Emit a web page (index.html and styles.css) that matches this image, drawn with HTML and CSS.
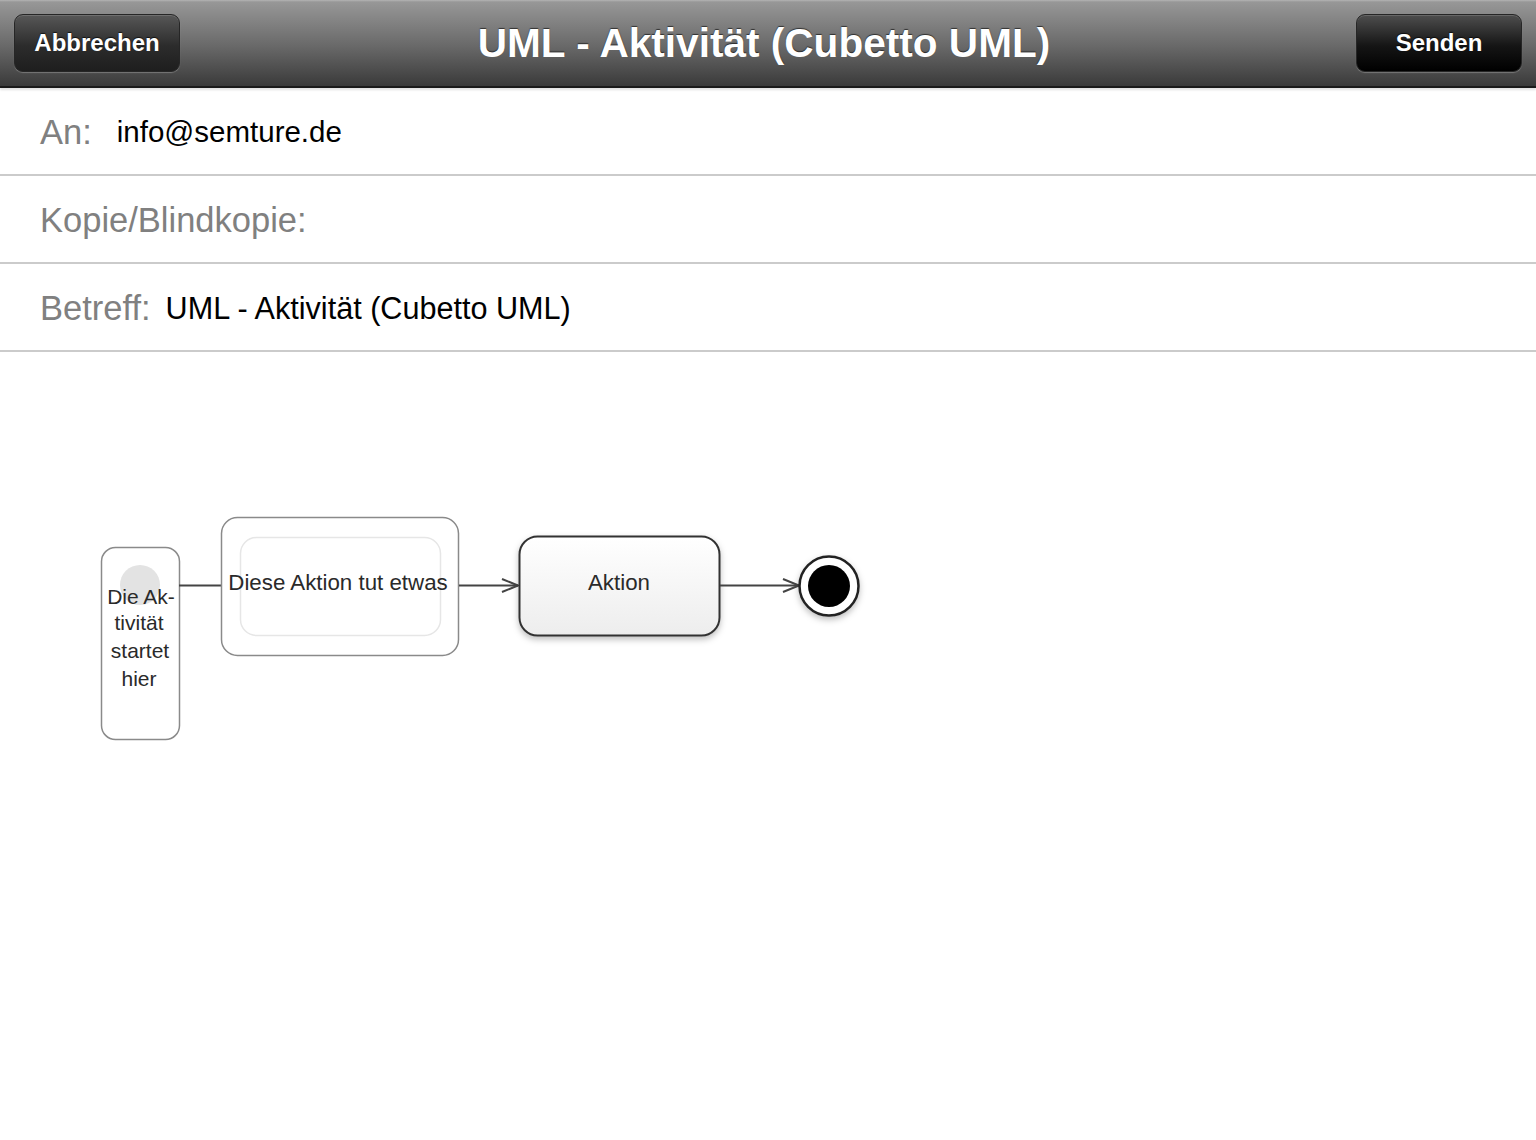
FILE: index.html
```html
<!DOCTYPE html>
<html lang="de">
<head>
    <meta charset="UTF-8">
    <meta name="viewport" content="width=device-width, initial-scale=1.0">
    <title>UML - Aktivität (Cubetto UML)</title>
    <link rel="stylesheet" href="styles.css">
</head>
<body>
    <div id="mailComposer">
        <div class="nav-bar">
            <button class="nav-button cancel">Abbrechen</button>
            <h1 class="nav-title">UML - Aktivität (Cubetto UML)</h1>
            <button class="nav-button send">Senden</button>
        </div>

        <div class="field-row">
            <span class="field-label">An:</span>
            <span class="field-value to">info@semture.de</span>
        </div>
        <div class="field-row">
            <span class="field-label">Kopie/Blindkopie:</span>
        </div>
        <div class="field-row">
            <span class="field-label">Betreff:</span>
            <span class="field-value">UML - Aktivität (Cubetto UML)</span>
        </div>

        <div class="mail-body">
            <svg class="diagram" width="900" height="420" viewBox="0 352 900 420">
                <defs>
                    <linearGradient id="actionFill" x1="0" y1="0" x2="0" y2="1">
                        <stop offset="0" stop-color="#ffffff"/>
                        <stop offset="1" stop-color="#ededed"/>
                    </linearGradient>
                    <filter id="shadow" x="-20%" y="-20%" width="140%" height="150%">
                        <feDropShadow dx="0" dy="3" stdDeviation="3" flood-color="#000" flood-opacity="0.25"/>
                    </filter>
                </defs>

                <!-- start node -->
                <rect x="101.5" y="547.5" width="78" height="192" rx="14" fill="#fff" stroke="#8a8a8a" stroke-width="1.5"/>
                <circle cx="140" cy="585" r="20" fill="#e3e3e3"/>
                <text class="node-text small" x="141" y="604">Die Ak-</text>
                <text class="node-text small" x="139" y="630">tivität</text>
                <text class="node-text small" x="140" y="658">startet</text>
                <text class="node-text small" x="139" y="686">hier</text>

                <line x1="179" y1="585.5" x2="221" y2="585.5" stroke="#444" stroke-width="2"/>

                <!-- first action -->
                <rect x="221.5" y="517.5" width="237" height="138" rx="16" fill="#fff" stroke="#8a8a8a" stroke-width="1.5"/>
                <rect x="240.5" y="537.5" width="200" height="98" rx="16" fill="none" stroke="#e6e6e6" stroke-width="1.5"/>
                <text class="node-text" x="338" y="590">Diese Aktion tut etwas</text>

                <line x1="459" y1="585.5" x2="518" y2="585.5" stroke="#444" stroke-width="2"/>
                <polyline points="502,579 518,585.5 502,592" fill="none" stroke="#444" stroke-width="2"/>

                <!-- second action -->
                <rect x="519.5" y="536.5" width="200" height="99" rx="18" fill="url(#actionFill)" stroke="#333" stroke-width="2" filter="url(#shadow)"/>
                <text class="node-text" x="619" y="590">Aktion</text>

                <line x1="720" y1="585.5" x2="799" y2="585.5" stroke="#444" stroke-width="2"/>
                <polyline points="783,579 799,585.5 783,592" fill="none" stroke="#444" stroke-width="2"/>

                <!-- end node -->
                <circle cx="829" cy="586" r="29.5" fill="#fff" stroke="#222" stroke-width="2.5" filter="url(#shadow)"/>
                <circle cx="829" cy="586" r="21" fill="#000"/>
            </svg>
        </div>
    </div>
</body>
</html>
```

FILE: styles.css
```css
body {
    margin: 0;
    padding: 0;
    background-color: #fff;
    font-family: "Liberation Sans", Arial, sans-serif;
}

#mailComposer {
    width: 1536px;
    min-height: 1140px;
    background-color: #fff;
}

.nav-bar {
    position: relative;
    height: 88px;
    box-sizing: border-box;
    display: flex;
    align-items: center;
    padding: 0 14px;
    background: linear-gradient(to bottom, #b4b4b4 0px, #979797 2px, #6a6a6a 45px, #3a3a3a 86px);
    border-bottom: 2px solid #1a1a1a;
    box-shadow: 0 2px 2px rgba(0, 0, 0, 0.12);
}

.nav-title {
    flex-grow: 1;
    margin: 0;
    padding-right: 8px;
    text-align: center;
    color: #fff;
    font-size: 40.6px;
    font-weight: bold;
    text-shadow: 0 -1px 1px rgba(0, 0, 0, 0.6);
}

.nav-button {
    width: 166px;
    height: 58px;
    padding: 0;
    border: 1px solid #262626;
    border-radius: 9px;
    color: #fff;
    font-family: "Liberation Sans", Arial, sans-serif;
    font-size: 24px;
    font-weight: bold;
    text-shadow: 0 -1px 1px rgba(0, 0, 0, 0.7);
    box-shadow: 0 1px 1px rgba(255, 255, 255, 0.25), inset 0 1px 0 rgba(255, 255, 255, 0.15);
    cursor: pointer;
}

.nav-button.cancel {
    background: linear-gradient(to bottom, #575757, #2c2c2c 55%, #1e1e1e);
}

.nav-button.send {
    background: linear-gradient(to bottom, #4e4e4e, #151515 55%, #000);
}

.field-row {
    height: 88px;
    box-sizing: border-box;
    display: flex;
    align-items: center;
    padding: 2px 40px 0;
    border-bottom: 2px solid #cbcbcb;
}

.field-label {
    color: #808080;
    font-size: 34.5px;
    margin-right: 15px;
}

.field-value {
    color: #000;
    font-size: 30.6px;
}

.field-value.to {
    font-size: 29.5px;
    margin-left: 10px;
}

.diagram {
    display: block;
}

.node-text {
    font-family: "Liberation Sans", Arial, sans-serif;
    font-size: 22.3px;
    fill: #2a2a2a;
    text-anchor: middle;
}

.node-text.small {
    font-size: 21px;
}
```
